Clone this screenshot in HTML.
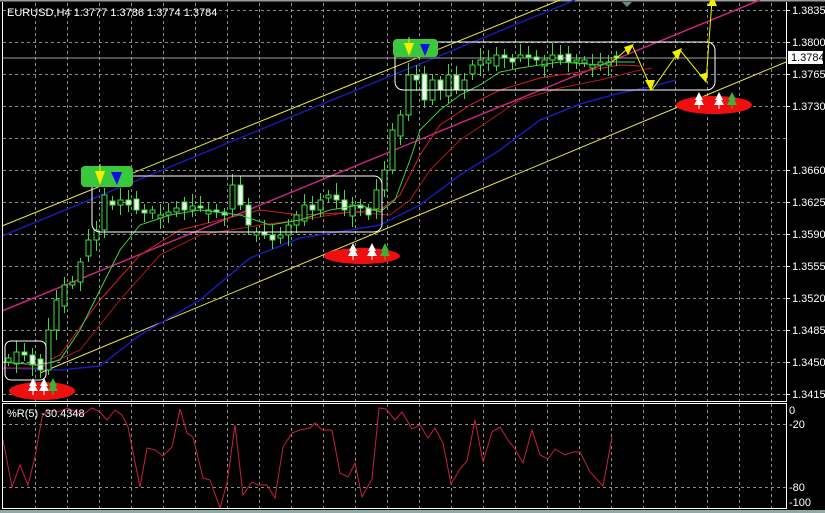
<!DOCTYPE html>
<html><head><meta charset="utf-8"><style>
html,body{margin:0;padding:0;background:#000;overflow:hidden}
svg{display:block}
text{font-family:"Liberation Sans",sans-serif;font-size:11px;fill:#fff}
</style></head><body>
<svg id="s" width="825" height="513" xmlns="http://www.w3.org/2000/svg">
<rect width="825" height="513" fill="#000"/>
<rect x="0" y="0" width="825" height="1.5" fill="#9a9a9a"/>
<rect x="0" y="510" width="825" height="3" fill="#8fa8a8"/>
<g id="grid" stroke="#8c8c8c" stroke-width="1" stroke-dasharray="3,3"></g>
<line x1="2" y1="226" x2="560" y2="0" stroke="#e6e64a" stroke-width="1"/>
<line x1="2" y1="236" x2="575" y2="0" stroke="#1a1aa8" stroke-width="1.5"/>
<line x1="2" y1="311" x2="760" y2="0" stroke="#c2267a" stroke-width="1.5"/>
<line x1="40" y1="373" x2="786" y2="62" stroke="#e6e64a" stroke-width="1"/>
<line x1="2" y1="58" x2="786" y2="58" stroke="#a0a0a0" stroke-width="1"/>
<polyline fill="none" stroke="#1a1ab4" stroke-width="1.5" points="2,368 60,370 100,366 140,335 200,300 250,258 300,238 350,230 380,225 420,205 460,175 500,150 540,120 580,104 620,93 650,87 676,80"/>
<polyline fill="none" stroke="#b01818" stroke-width="1" points="2,368 40,368 80,350 120,300 160,255 200,235 260,225 300,220 350,212 390,215 410,200 430,170 460,140 490,120 520,100 560,88 600,80 640,70 652,68"/>
<polyline fill="none" stroke="#d02020" stroke-width="1" points="2,362 40,365 60,355 100,300 140,255 180,230 220,220 260,210 300,215 340,213 380,210 400,195 420,155 440,125 470,105 500,90 540,78 580,72 620,65 640,66"/>
<g id="candles"></g>
<polyline fill="none" stroke="#40d040" stroke-width="1" points="2,362 40,365 60,360 80,330 100,290 120,250 140,225 170,215 200,210 240,215 270,225 300,220 330,210 360,205 380,212 395,200 410,160 420,130 440,110 460,95 480,85 500,72 520,68 560,62 600,65 612,62 635,62"/>
<rect x="5" y="341" width="41" height="39" rx="6" fill="none" stroke="#fff" stroke-width="1"/>
<rect x="92" y="176" width="290" height="56" rx="8" fill="none" stroke="#fff" stroke-width="1"/>
<rect x="395" y="42" width="320" height="48" rx="8" fill="none" stroke="#fff" stroke-width="1"/>
<rect x="81" y="166" width="52" height="21" rx="4" fill="#3cc83c"/>
<polygon points="95,171 105,171 100,185" fill="#f0f000"/><line x1="100" y1="164" x2="100" y2="172" stroke="#f0f000"/>
<polygon points="111,172 122,172 117,185" fill="#1010e0"/>
<rect x="393" y="39" width="45" height="18" rx="4" fill="#3cc83c"/>
<polygon points="404,43 414,43 409,56" fill="#f0f000"/><line x1="409" y1="37" x2="409" y2="44" stroke="#f0f000"/>
<polygon points="420,44 430,44 425,56" fill="#1010e0"/>
<ellipse cx="42" cy="391" rx="33" ry="9" fill="#ee1010"/>
<ellipse cx="362" cy="256" rx="38" ry="8" fill="#ee1010"/>
<ellipse cx="714" cy="105" rx="38" ry="9" fill="#ee1010"/>
<g id="trees"></g>
<polyline fill="none" stroke="#f0f000" stroke-width="1" points="612,62 632,45 652,90 680,50 706,82 712,0"/>
<polygon points="624,47 634,44 628,55" fill="#f0f000"/>
<polygon points="645,80 655,80 651,91" fill="#f0f000"/>
<polygon points="672,52 682,48 678,60" fill="#f0f000"/>
<polygon points="699,75 708,72 706,82" fill="#f0f000"/>
<polygon points="707,6 717,6 713,-3" fill="#f0f000"/>
<polygon points="622,2 632,2 627,7" fill="#6a8a8a"/>
<polyline fill="none" stroke="#c8203c" stroke-width="1" points="3,440 12,487 20,465 28,485 35,457 42,417 48,410 58,412 68,408 82,415 92,408 100,412 107,420 115,410 122,415 128,427 140,487 147,448 155,450 163,456 172,447 180,409 187,433 193,437 203,478 210,480 220,508 227,483 235,425 243,495 252,482 258,485 267,485 275,498 283,447 292,433 300,430 310,428 315,423 322,430 332,430 340,473 348,477 355,463 362,497 372,479 379,408 386,409 395,420 402,412 412,429 420,425 428,438 435,428 443,443 451,484 460,469 467,461 475,420 483,462 492,432 500,427 508,440 515,449 523,463 532,430 540,455 548,459 555,449 565,455 573,452 580,452 590,472 603,486 612,437"/>
<line x1="2.5" y1="2" x2="2.5" y2="401" stroke="#fff"/>
<line x1="786.5" y1="2" x2="786.5" y2="401" stroke="#fff"/>
<line x1="2" y1="401.5" x2="787" y2="401.5" stroke="#fff"/>
<line x1="2" y1="403.5" x2="787" y2="403.5" stroke="#fff"/>
<line x1="2.5" y1="403" x2="2.5" y2="509" stroke="#fff"/>
<line x1="786.5" y1="403" x2="786.5" y2="509" stroke="#fff"/>
<line x1="2" y1="508.5" x2="787" y2="508.5" stroke="#fff"/>
<rect x="788" y="51" width="35" height="13" fill="#fff"/>
<text x="791" y="61" style="fill:#000">1.3784</text>
<g id="labels"></g>
<text x="7" y="16">EURUSD,H4  1.3777 1.3786 1.3774 1.3784</text>
<text x="7" y="417">%R(5) -30.4348</text>
<text x="789" y="414">0</text>
<text x="789" y="428">-20</text>
<text x="789" y="491">-80</text>
<text x="789" y="506">-100</text>
</svg>
<script>
(function(){
var NS="http://www.w3.org/2000/svg";
function el(t,a,p){var e=document.createElementNS(NS,t);for(var k in a)e.setAttribute(k,a[k]);p.appendChild(e);return e;}
var g=document.getElementById('grid');
for(var x=35;x<786;x+=32){el('line',{x1:x+.5,y1:3,x2:x+.5,y2:401},g);el('line',{x1:x+.5,y1:404,x2:x+.5,y2:508},g);}
var ys=[10,42,74,106,138,170,202,234,266,298,330,362,394];
var lb=['1.3835','1.3800','1.3765','1.3730','','1.3660','1.3625','1.3590','1.3555','1.3520','1.3485','1.3450','1.3415'];
var L=document.getElementById('labels');
ys.forEach(function(y,i){el('line',{x1:3,y1:y+.5,x2:786,y2:y+.5},g);if(lb[i]){el('line',{x1:786,y1:y+.5,x2:790,y2:y+.5,stroke:'#fff'},L);var t=el('text',{x:792,y:y+4},L);t.textContent=lb[i];}});
el('line',{x1:3,y1:424.5,x2:786,y2:424.5},g);el('line',{x1:3,y1:487.5,x2:786,y2:487.5},g);
var c=[358,352,355,365,370,330,300,285,282,262,240,230,195,205,200,205,210,213,210,215,212,208,210,206,208,210,212,215,185,205,225,232,235,240,235,225,215,205,210,200,195,200,210,205,208,215,190,170,130,115,75,80,100,80,90,75,90,80,65,60,60,55,58,62,55,57,60,60,55,60,62,60,60,65,62,62,58];
var C=document.getElementById('candles');
var o=362;
for(var i=0;i<c.length;i++){var xx=8+8*i;var cl=c[i];var op=(i%3==1)?o+((i%2)?6:-6):o;
 if(Math.abs(op-cl)<2)op=cl+3;
 var tp=Math.min(op,cl),bt=Math.max(op,cl);
 var hi=tp-4-(i*7%9),lo=bt+4+(i*5%8);
 el('line',{x1:xx+.5,y1:hi,x2:xx+.5,y2:lo,stroke:'#3cdc3c'},C);
 el('rect',{x:xx-2,y:tp,width:5,height:Math.max(bt-tp,1),fill:(op<cl)?'#f4f4f4':'#000',stroke:'#3cdc3c','stroke-width':1},C);
 o=cl;}
var T=document.getElementById('trees');
function tree(x,y,col){el('polygon',{points:(x-4)+','+(y+6)+' '+x+','+(y-2)+' '+(x+4)+','+(y+6),fill:col},T);el('polygon',{points:(x-5)+','+(y+11)+' '+x+','+(y+2)+' '+(x+5)+','+(y+11),fill:col},T);el('line',{x1:x,y1:y+11,x2:x,y2:y+15,stroke:col},T);}
[[33,380,'#fff'],[44,380,'#fff'],[53,380,'#3cb43c'],[353,245,'#fff'],[372,245,'#fff'],[385,245,'#3cb43c'],[699,94,'#fff'],[719,94,'#fff'],[732,94,'#3cb43c']].forEach(function(a){tree(a[0],a[1],a[2]);});
})();
</script>
</body></html>
